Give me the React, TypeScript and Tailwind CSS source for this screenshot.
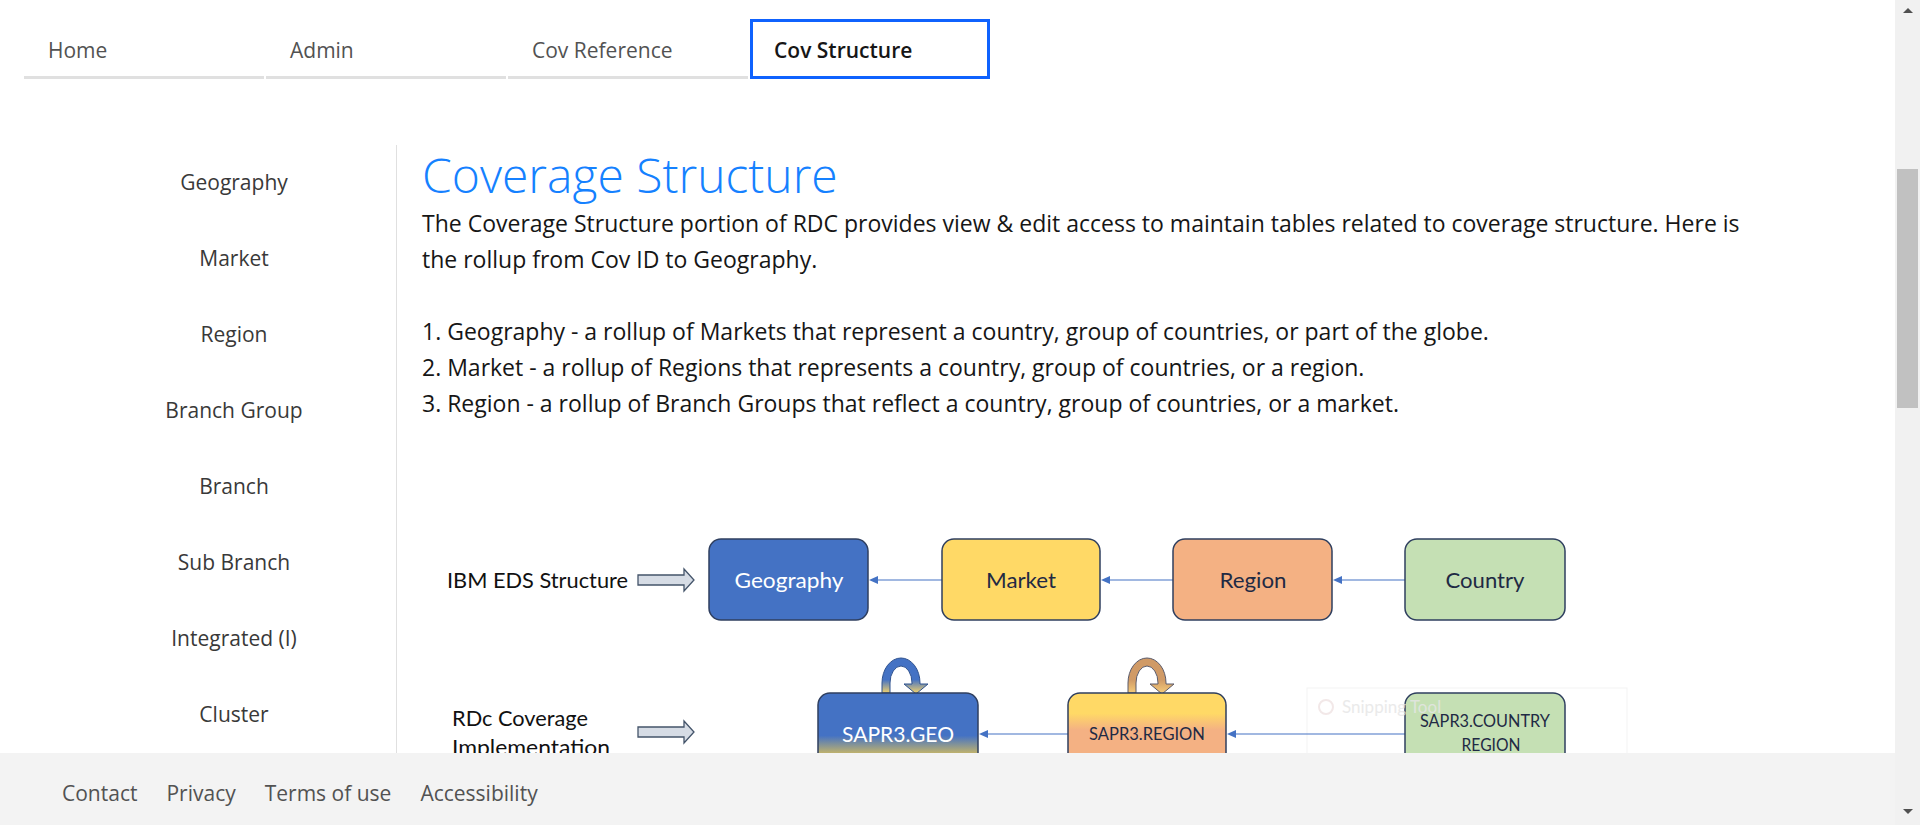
import type { FC } from "react";

const tabs = ["Home", "Admin", "Cov Reference", "Cov Structure"];
const sideItems = ["Geography", "Market", "Region", "Branch Group", "Branch", "Sub Branch", "Integrated (I)", "Cluster"];
const footerLinks = ["Contact", "Privacy", "Terms of use", "Accessibility"];

const LoopArrow: FC<{ x: number; id: string; top: string; bottom: string; stroke: string }> = ({ x, id, top, bottom, stroke }) => (
  <g transform={`translate(${x - 882} 0)`}>
    <defs>
      <linearGradient id={id} x1="0" y1="0" x2="0" y2="1">
        <stop offset="0" stopColor={top} />
        <stop offset="0.6" stopColor={top} />
        <stop offset="1" stopColor={bottom} />
      </linearGradient>
    </defs>
    <path
      d="M882 694 L882 684 A19 25 0 0 1 920 684 L920 685 L928 685 L916 695 L904 685 L912 685 L912 684 A11 17 0 0 0 890 684 L890 694 Z"
      fill={`url(#${id})`}
      stroke={stroke}
      strokeWidth="1"
    />
  </g>
);

const HollowArrow: FC<{ y: number }> = ({ y }) => (
  <path
    d={`M638 ${y - 5} L684 ${y - 5} L684 ${y - 11} L694 ${y} L684 ${y + 11} L684 ${y + 5} L638 ${y + 5} Z`}
    fill="#d6dce5"
    stroke="#44546a"
    strokeWidth="1.3"
  />
);

const Connector: FC<{ x1: number; x2: number; y: number }> = ({ x1, x2, y }) => (
  <g>
    <line x1={x1} y1={y} x2={x2 + 8} y2={y} stroke="#4472c4" strokeWidth="1.2" />
    <path d={`M${x2 + 1} ${y} L${x2 + 10} ${y - 4} L${x2 + 10} ${y + 4} Z`} fill="#4472c4" />
  </g>
);

const Diagram: FC = () => (
  <svg width="1200" height="300" viewBox="430 520 1200 300" style={{ fontFamily: "Lato, 'Open Sans', sans-serif" }}>
    <defs>
      <linearGradient id="geoGrad" x1="0" y1="694" x2="0" y2="776" gradientUnits="userSpaceOnUse">
        <stop offset="0" stopColor="#4472c4" />
        <stop offset="0.52" stopColor="#4472c4" />
        <stop offset="0.75" stopColor="#c9b766" />
        <stop offset="1" stopColor="#ffd966" />
      </linearGradient>
      <linearGradient id="regGrad" x1="0" y1="694" x2="0" y2="776" gradientUnits="userSpaceOnUse">
        <stop offset="0" stopColor="#ffd966" />
        <stop offset="0.25" stopColor="#ffd966" />
        <stop offset="0.45" stopColor="#f4b183" />
        <stop offset="1" stopColor="#f4b183" />
      </linearGradient>
    </defs>

    {/* IBM EDS row */}
    <text x="447" y="589" fontSize="22" fill="#111" textLength="181" lengthAdjust="spacingAndGlyphs">IBM EDS Structure</text>
    <HollowArrow y={581} />
    <rect x="709" y="540" width="159" height="81" rx="12" fill="#4472c4" stroke="#2f3f5f" strokeWidth="1.5" />
    <text x="789" y="589" fontSize="22" fill="#fff" textAnchor="middle" textLength="109" lengthAdjust="spacingAndGlyphs">Geography</text>
    <Connector x1={942} x2={868} y={581} />
    <rect x="942" y="540" width="158" height="81" rx="12" fill="#ffd966" stroke="#2f3f5f" strokeWidth="1.5" />
    <text x="1021" y="589" fontSize="22" fill="#1f2a44" textAnchor="middle" textLength="70" lengthAdjust="spacingAndGlyphs">Market</text>
    <Connector x1={1173} x2={1100} y={581} />
    <rect x="1173" y="540" width="159" height="81" rx="12" fill="#f4b183" stroke="#2f3f5f" strokeWidth="1.5" />
    <text x="1253" y="589" fontSize="22" fill="#1f2a44" textAnchor="middle" textLength="67" lengthAdjust="spacingAndGlyphs">Region</text>
    <Connector x1={1405} x2={1332} y={581} />
    <rect x="1405" y="540" width="160" height="81" rx="12" fill="#c5e0b4" stroke="#2f3f5f" strokeWidth="1.5" />
    <text x="1485" y="589" fontSize="22" fill="#1f2a44" textAnchor="middle" textLength="79" lengthAdjust="spacingAndGlyphs">Country</text>

    {/* RDc row */}
    <text x="452" y="727" fontSize="22" fill="#111" textLength="136" lengthAdjust="spacingAndGlyphs">RDc Coverage</text>
    <text x="452" y="756" fontSize="22" fill="#111" textLength="158" lengthAdjust="spacingAndGlyphs">Implementation</text>
    <HollowArrow y={733} />

    {/* snipping tool watermark */}
    <rect x="1307" y="689" width="320" height="100" fill="#fff" stroke="#f3f3f3" strokeWidth="1" />
    <circle cx="1326" cy="708" r="7" fill="none" stroke="#f2e8e8" strokeWidth="2" />

    <LoopArrow x={882} id="loopGeo" top="#4472c4" bottom="#ffd966" stroke="#2f528f" />
    <rect x="818" y="694" width="160" height="82" rx="12" fill="url(#geoGrad)" stroke="#2f3f5f" strokeWidth="1.5" />
    <text x="898" y="743" fontSize="22" fill="#fff" textAnchor="middle" textLength="112" lengthAdjust="spacingAndGlyphs">SAPR3.GEO</text>
    <Connector x1={1068} x2={978} y={735} />
    <LoopArrow x={1128} id="loopReg" top="#d09a66" bottom="#f8cf7a" stroke="#5a5a6a" />
    <rect x="1068" y="694" width="158" height="82" rx="12" fill="url(#regGrad)" stroke="#2f3f5f" strokeWidth="1.5" />
    <text x="1147" y="741" fontSize="18" fill="#1f2a44" textAnchor="middle" textLength="116" lengthAdjust="spacingAndGlyphs">SAPR3.REGION</text>
    <Connector x1={1405} x2={1226} y={735} />
    <rect x="1405" y="694" width="160" height="82" rx="12" fill="#c5e0b4" stroke="#2f3f5f" strokeWidth="1.5" />
    <text x="1342" y="714" fontSize="17" fill="#e6e6e6" opacity="0.8">Snipping Tool</text>
    <text x="1485" y="728" fontSize="18" fill="#1f2a44" textAnchor="middle" textLength="130" lengthAdjust="spacingAndGlyphs">SAPR3.COUNTRY</text>
    <text x="1491" y="752" fontSize="18" fill="#1f2a44" textAnchor="middle" textLength="59" lengthAdjust="spacingAndGlyphs">REGION</text>
  </svg>
);

const App: FC = () => {
  return (
    <div className="flex h-[825px] w-full overflow-hidden bg-white font-['Open_Sans',sans-serif]">
      <div className="relative flex flex-1 flex-col overflow-hidden">
        <nav className="flex gap-[2px] pl-[24px] pt-[19px]">
          {tabs.map((t, i) =>
            i === 3 ? (
              <div key={t} className="flex h-[60px] w-[240px] items-center border-[3px] border-[#0f62fe] pl-[21px] pt-[3px] text-[21px] font-semibold text-[#161616]">
                {t}
              </div>
            ) : (
              <div key={t} className="flex h-[60px] w-[240px] items-center border-b-[3px] border-[#e0e0e0] pl-[24px] pt-[6px] text-[21px] text-[#525252]">
                {t}
              </div>
            )
          )}
        </nav>

        <div className="mt-[66px] flex flex-1">
          <aside className="ml-[72px] w-[325px] border-r border-[#e0e0e0]">
            {sideItems.map((s) => (
              <div key={s} className="flex h-[76px] items-center justify-center text-[21px] text-[#393939]">
                {s}
              </div>
            ))}
          </aside>
          <main className="flex-1 pl-[25px]">
            <h1 className="text-[48px] font-light leading-[60px] text-[#1581ff]">Coverage Structure</h1>
            <div className="w-[1335px] text-[23px] leading-[36px] text-[#161616]">
              <p>
                The Coverage Structure portion of RDC provides view &amp; edit access to maintain tables related to coverage structure. Here is the rollup from Cov ID to Geography.
              </p>
              <p className="h-[36px]"></p>
              <p>1. Geography - a rollup of Markets that represent a country, group of countries, or part of the globe.</p>
              <p>2. Market - a rollup of Regions that represents a country, group of countries, or a region.</p>
              <p>3. Region - a rollup of Branch Groups that reflect a country, group of countries, or a market.</p>
            </div>
            <div className="ml-[8px] mt-[98px]">
              <Diagram />
            </div>
          </main>
        </div>

        <footer className="absolute bottom-0 left-0 right-0 flex h-[72px] items-center gap-[29px] bg-[#f3f3f3] pl-[62px] pt-[9px] text-[21px] text-[#525252]">
          {footerLinks.map((l) => (
            <span key={l}>{l}</span>
          ))}
        </footer>
      </div>

      <div className="flex w-[25px] flex-col items-center bg-[#f1f1f1]">
        <div className="mt-[8px] h-0 w-0 border-x-[5px] border-b-[5px] border-x-transparent border-b-[#505050]"></div>
        <div className="mt-[156px] h-[239px] w-[21px] bg-[#c1c1c1]"></div>
        <div className="flex-1"></div>
        <div className="mb-[11px] h-0 w-0 border-x-[5px] border-t-[5px] border-x-transparent border-t-[#505050]"></div>
      </div>
    </div>
  );
};

export default App;
